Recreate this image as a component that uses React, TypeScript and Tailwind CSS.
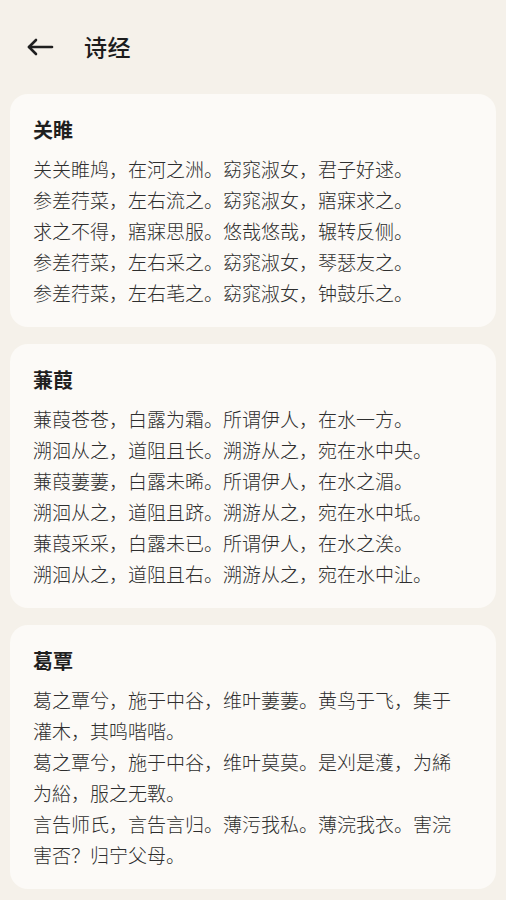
import React from 'react';

interface Poem {
  title: string;
  lines: string[];
}

const poems: Poem[] = [
  {
    title: '关睢',
    lines: [
      '关关睢鸠，在河之洲。窈窕淑女，君子好逑。',
      '参差荇菜，左右流之。窈窕淑女，寤寐求之。',
      '求之不得，寤寐思服。悠哉悠哉，辗转反侧。',
      '参差荇菜，左右采之。窈窕淑女，琴瑟友之。',
      '参差荇菜，左右芼之。窈窕淑女，钟鼓乐之。',
    ],
  },
  {
    title: '蒹葭',
    lines: [
      '蒹葭苍苍，白露为霜。所谓伊人，在水一方。',
      '溯洄从之，道阻且长。溯游从之，宛在水中央。',
      '蒹葭萋萋，白露未晞。所谓伊人，在水之湄。',
      '溯洄从之，道阻且跻。溯游从之，宛在水中坻。',
      '蒹葭采采，白露未已。所谓伊人，在水之涘。',
      '溯洄从之，道阻且右。溯游从之，宛在水中沚。',
    ],
  },
  {
    title: '葛覃',
    lines: [
      '葛之覃兮，施于中谷，维叶萋萋。黄鸟于飞，集于灌木，其鸣喈喈。',
      '葛之覃兮，施于中谷，维叶莫莫。是刈是濩，为絺为綌，服之无斁。',
      '言告师氏，言告言归。薄污我私。薄浣我衣。害浣害否？归宁父母。',
    ],
  },
];

function BackArrow() {
  return (
    <svg width="28" height="20" viewBox="0 0 28 20" fill="none" stroke="#1f1f1f" strokeWidth="2.6" strokeLinecap="round" strokeLinejoin="round">
      <path d="M26 10H3" />
      <path d="M10 3L3 10l7 7" />
    </svg>
  );
}

export default function App() {
  return (
    <div
      className="min-h-[900px] bg-[#f5f1ea] pb-6"
      style={{ fontFamily: '"Noto Sans CJK SC", "Noto Sans", sans-serif' }}
    >
      {/* header */}
      <div className="flex items-center h-[66px] pt-[26px] pl-[26px]">
        <button className="flex items-center justify-center w-7 mt-[1px]">
          <BackArrow />
        </button>
        <h1 className="ml-[30px] text-[23px] font-medium text-[#1c1c1c] tracking-[0.5px]">诗经</h1>
      </div>

      <div className="flex flex-col gap-[17px] px-[10px] mt-[28px]">
        {poems.map((poem) => (
          <div key={poem.title} className="bg-[#fcfaf7] rounded-[18px] pl-[23px] pr-[32px] pt-[21px] pb-[19px]">
            <h2 className="text-[20px] font-bold leading-[30px] text-[#1f1f1f]">{poem.title}</h2>
            <div className="mt-[8px] text-[19px] font-light leading-[31px] text-[#2e2e2e]">
              {poem.lines.map((line, i) => (
                <p key={i}>{line}</p>
              ))}
            </div>
          </div>
        ))}
      </div>
    </div>
  );
}
